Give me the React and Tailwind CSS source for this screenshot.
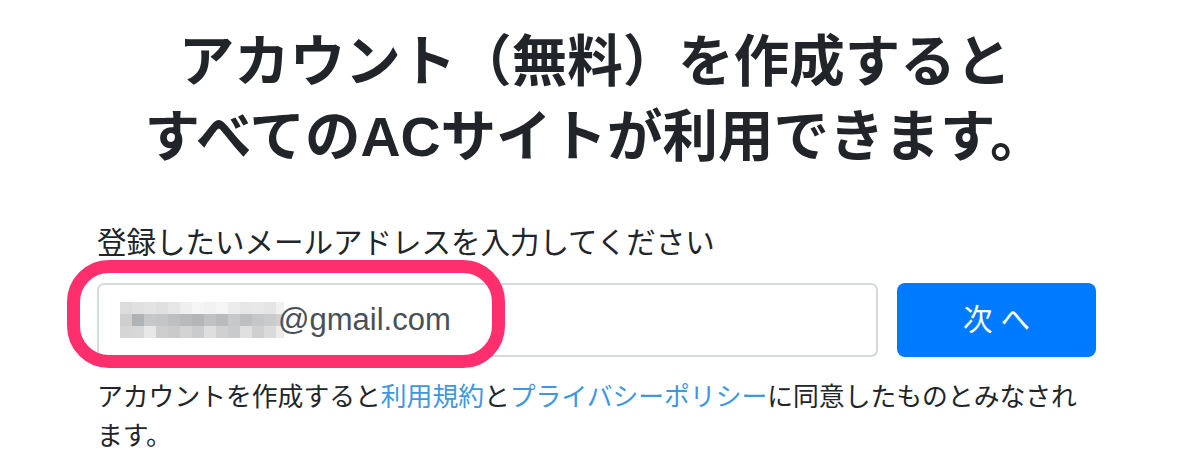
const blurRows = [
  ["#dcdcdc", "#e0e0e0", "#e3e3e3", "#e0e0e0", "#e6e6e6", "#efefef", "#f5f5f5", "#f2f2f2", "#f5f5f5", "#ececec", "#e6e6e6", "#e8e8e8", "#e5e5e5", "#f0f0f0"],
  ["#cfcfcf", "#b0b3b5", "#c5c7c8", "#c3c5c7", "#bdbfc1", "#b7b9bb", "#b3b6b8", "#bfc1c3", "#b8babc", "#c6c8c9", "#bdbfc1", "#c4c6c7", "#c9cbcc", "#d0d0d0"],
  ["#d5d5d5", "#d7d7d7", "#e8e8e8", "#cdcdcd", "#c8cacb", "#d3d3d3", "#c9cbcc", "#dedede", "#d0d0d0", "#c8cacb", "#e0e0e0", "#cfcfcf", "#dadada", "#ececec"],
];

// pixelated (masked) part of the email address
function BlurredName() {
  return (
    <svg width="164" height="36" viewBox="0 0 164 36" className="shrink-0">
      {blurRows.map((row, r) =>
        row.map((c, i) => (
          <rect key={`${r}-${i}`} x={i * 12} y={r * 12} width={i === 13 ? 8 : 12} height="12" fill={c} />
        ))
      )}
    </svg>
  );
}

export default function App() {
  return (
    <div
      className="min-h-[470px] bg-white text-[#212529] pt-[25px]"
      style={{ fontFamily: '"Liberation Sans", "Noto Sans CJK JP", sans-serif' }}
    >
      {/* Heading */}
      <h1 className="text-center font-bold text-[55.5px] leading-[75px] text-[#212529]">
        アカウント（無料）を作成すると
        <br />
        すべてのACサイトが利用できます。
      </h1>

      <div className="ml-[97px] w-[999px] mt-[46px]">
        <label className="block text-[29.5px] leading-[44px] mb-[18px]">
          登録したいメールアドレスを入力してください
        </label>

        {/* Email + button */}
        <div className="relative flex gap-[19px]">
          <div className="flex items-center flex-1 h-[74px] border-2 border-[#d5d9dd] rounded-[7px] pl-[21px] text-[31px] text-[#495057]">
            <BlurredName />
            <span className="-ml-[6px]">@gmail.com</span>
          </div>
          <button className="w-[199px] h-[74px] rounded-[8px] bg-[#007bff] text-white text-[29.5px]">
            次 へ
          </button>

          {/* highlight annotation */}
          <div className="absolute -left-[30px] -top-[23px] w-[438px] h-[108px] border-[13px] border-[#fe2f6c] rounded-[42px] pointer-events-none" />
        </div>

        {/* Terms */}
        <p className="mt-[21px] text-[25.8px] leading-[39px]">
          アカウントを作成すると<span className="text-[#3d97e3]">利用規約</span>と
          <span className="text-[#3d97e3]">プライバシーポリシー</span>に同意したものとみなされます。
        </p>
      </div>
    </div>
  );
}
